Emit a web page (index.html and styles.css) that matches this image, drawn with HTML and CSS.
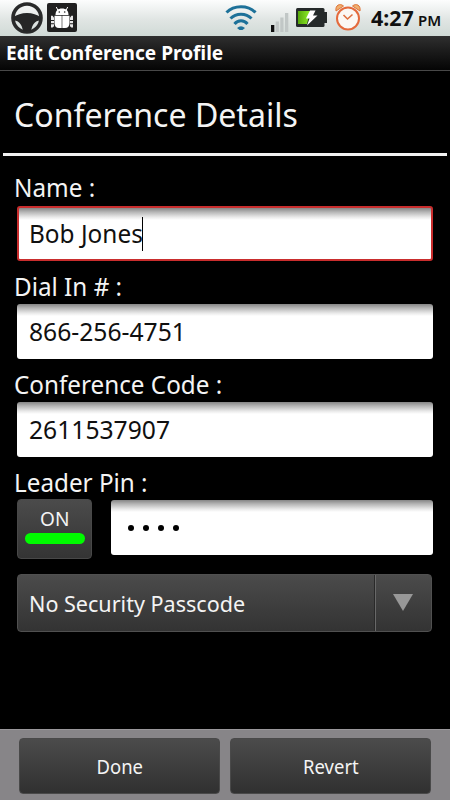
FILE: index.html
```html
<!DOCTYPE html>
<html lang="en">
<head>
<meta charset="utf-8">
<title>Edit Conference Profile</title>
<link rel="stylesheet" href="styles.css">
</head>
<body>
<header class="status">
  <svg class="ic-wheel" width="34" height="34" viewBox="0 0 34 34">
    <circle cx="17" cy="17" r="14" fill="none" stroke="#292a2a" stroke-width="3.600"/>
    <path d="M3 16.500C7 13.500 11.500 12 17 12s10 1.500 14 4.500L30 19.500c-5 0-8 4-9 11h-8C12 23.500 9 19.500 4 19.500z" fill="#252626"/>
  </svg>
  <svg class="ic-bug" width="30" height="29" viewBox="0 0 30 29">
    <rect width="30" height="29" rx="2" fill="#202020"/>
    <path d="M8.500 12C8.500 7.500 11 5.500 15 5.500s6.500 2 6.500 6.500z" fill="#fff"/>
    <path d="M10.800 7 9.300 4M19.200 7 20.700 4" stroke="#fff" stroke-width="1"/>
    <circle cx="12.300" cy="9" r=".8" fill="#222"/><circle cx="17.700" cy="9" r=".8" fill="#222"/>
    <path d="M7.500 12.800h7.200V25H12c-3 0-4.500-2-4.500-5zM15.300 12.800h7.200V20c0 3-1.500 5-4.500 5h-2.700z" fill="#fff"/>
    <path d="M4 12.800h1.600l1.400 2v2.100H4zM4 17.900h3v2.300H4zM4 24.600h1.600l1.400-1.400v-2H4zM26 12.800h-1.600l-1.400 2v2.100h3zM26 17.900h-3v2.300h3zM26 24.600h-1.600L23 23.200v-2h3z" fill="#e8e8e8"/>
  </svg>
  <span class="spacer"></span>
  <svg class="ic-wifi" width="32" height="28" viewBox="0 0 32 28">
    <g fill="none" stroke="#1d7199" stroke-width="3">
      <path d="M1.500 8.500C9 .7 23 .7 30.500 8.500"/>
      <path d="M5.500 14.500C11 8.700 21 8.700 26.500 14.500"/>
      <path d="M9.500 20C13 15.800 19 15.800 22.500 20"/>
    </g>
    <path d="M12 24q4-3.500 8 0l-2.500 2h-3z" fill="#1d7199"/>
  </svg>
  <svg class="ic-signal" width="18" height="19" viewBox="0 0 18 19">
    <path d="M0 12h3.300v7H0z" fill="#101010"/>
    <path d="M4.700 8.500h3.200V19H4.700zM9.300 4.500h3.200V19H9.300zM14 0h3.300v19H14z" fill="#c1c7c6"/>
  </svg>
  <svg class="ic-battery" width="32" height="20" viewBox="0 0 32 20">
    <defs><linearGradient id="charge"><stop offset="0" stop-color="#56a80b"/><stop offset="1" stop-color="#8fec28"/></linearGradient></defs>
    <rect x="0" y="0" width="28.500" height="19" rx="1.500" fill="#252a2a"/>
    <path d="M28 4h3v11h-3z" fill="#252a2a"/>
    <path d="M2 3h12l-3 13H2z" fill="url(#charge)"/>
    <path d="M14 2.500h5.500L17 7.500h4.500L11 17.500l2.500-7H10z" fill="#fff"/>
  </svg>
  <svg class="ic-alarm" width="26" height="27" viewBox="0 0 26 27">
    <path d="M1 7C0 1 5-1 8.500 2zM25 7c1-6-4-8-7.500-5z" fill="#f0b070" stroke="#df7439"/>
    <circle cx="13" cy="14.500" r="11" fill="#fbf8f4" stroke="#e46a3c" stroke-width="2"/>
    <path d="M8.500 11l4 4 5-4.500" fill="none" stroke="#dd7040" stroke-width="1.600"/>
  </svg>
  <span class="clock"><span class="fit time">4:27</span></span>
  <span class="ampm"><span class="fit pm">PM</span></span>
</header>
<div class="titlebar"><span class="fit title">Edit Conference Profile</span></div>
<main>
  <h1><span class="fit heading">Conference Details</span></h1>
  <label class="lbl"><span class="fit f-name">Name :</span></label>
  <div class="input focus"><span class="fit v-name">Bob Jones</span><i class="caret"></i></div>
  <label class="lbl dial"><span class="fit f-dial">Dial In # :</span></label>
  <div class="input"><span class="fit v-dial">866-256-4751</span></div>
  <label class="lbl code"><span class="fit f-code">Conference Code :</span></label>
  <div class="input"><span class="fit v-code">2611537907</span></div>
  <label class="lbl leader"><span class="fit f-pin">Leader Pin :</span></label>
  <div class="pinrow">
    <button class="toggle"><span class="fit on">ON</span><i class="lamp"></i></button>
    <div class="input pin"><i></i><i></i><i></i><i></i></div>
  </div>
  <div class="select">
    <div class="choice"><span class="fit sel">No Security Passcode</span></div>
    <div class="arrow"><svg width="20" height="17" viewBox="0 0 20 17"><path d="M0 0h20L10 17z" fill="#989898"/></svg></div>
  </div>
</main>
<footer>
  <button class="btn"><span class="fit done">Done</span></button>
  <button class="btn"><span class="fit revert">Revert</span></button>
</footer>
</body>
</html>
```
FILE: styles.css
```css
* { box-sizing: border-box; }
body {
  margin: 0; width: 450px; height: 800px; overflow: hidden;
  display: flex; flex-direction: column;
  background: #000; color: #f4f4f4;
  font-family: "Noto Sans", "Open Sans", sans-serif;
}
button { font: inherit; color: inherit; margin: 0; padding: 0; }
.fit { display: inline-block; white-space: nowrap; transform-origin: 0 50%; }
.title { transform: scaleX(1.004); }
.time { transform: scaleX(1.02); }
.heading { transform: scaleX(.957); }
.f-name, .f-dial, .f-code, .f-pin { transform: scaleX(.97); }
.v-name { transform: scaleX(.975); }
.v-dial, .v-code { transform: scaleX(.986); }
.sel { transform: scaleX(.958); }
.done, .revert { transform: scaleX(.9); transform-origin: 50% 50%; }
.on { transform: scaleX(.93); transform-origin: 50% 50%; }

.status {
  height: 36px; flex: none; display: flex; align-items: flex-start;
  background: linear-gradient(#fcfdfd, #e0e5e3 55%, #d0dad6);
  color: #101010; padding-left: 10px;
}
.status svg { flex: none; }
.ic-wheel { margin-top: 1px; }
.ic-bug { margin: 3px 0 0 3px; }
.spacer { flex: 1; }
.ic-wifi { margin: 4px 14px 0 0; }
.ic-signal { margin: 13px 7px 0 0; }
.ic-battery { margin: 8px 7px 0 0; }
.ic-alarm { margin: 4px 10px 0 0; }
.clock { width: 47px; font-size: 21px; font-weight: 700; line-height: 36px; }
.ampm { width: 32px; font-size: 15px; font-weight: 600; line-height: 40px; }

.titlebar {
  height: 35px; flex: none; padding-left: 6px;
  background: linear-gradient(#2f2f2f, #1b1b1b 45%, #050505);
  border-bottom: 1px solid #484848;
  font-size: 19px; font-weight: 700; line-height: 34px; color: #fff;
}

main { flex: 1; padding: 0 17px; }
h1 {
  height: 85px; margin: 0 -14px 0 -14px; padding-left: 11px;
  border-bottom: 3px solid #f1f1f1;
  font-size: 33.5px; font-weight: 400; line-height: 86px;
}
.lbl { display: block; height: 50px; margin-left: -3px; font-size: 25px; line-height: 62px; }
.lbl.dial, .lbl.code { height: 43px; line-height: 50px; }
.lbl.leader { height: 42px; line-height: 50px; }
.input {
  height: 55px; padding-left: 12px; border-radius: 3px;
  background: linear-gradient(#858585, #b5b5b5 4px, #e8e8e8 9px, #fff 12px);
  color: #101010; font-size: 25px; line-height: 55px;
  display: flex; align-items: center;
}
.input.focus { border: 2px solid #c92d2d; padding-left: 10px; line-height: 51px; }
.caret { width: 1px; height: 34px; margin-left: -4px; background: #000; }
.pinrow { display: flex; justify-content: space-between; height: 75px; align-items: flex-start; }
.toggle {
  width: 75px; height: 60px; border: 1px solid #484848; border-radius: 4px;
  background: linear-gradient(#4b4b4b, #343434);
  display: flex; flex-direction: column; align-items: center;
  font-size: 20.5px; line-height: 37px;
}
.toggle .on { height: 33px; }
.lamp { width: 60px; height: 11px; border-radius: 6px; background: #00fb00; }
.pin { width: 322px; margin-top: 1px; padding-left: 17px; gap: 9px; }
.pin i { width: 6px; height: 6px; border-radius: 50%; background: #000; }
.select {
  width: 415px; height: 58px; border: 1px solid #505050; border-radius: 4px;
  background: linear-gradient(#4b4b4b, #333);
  display: flex; font-size: 22.5px; line-height: 58px;
}
.choice { width: 357px; padding-left: 11px; border-right: 1px solid #292929; }
.arrow { flex: 1; display: flex; align-items: center; justify-content: center; border-left: 1px solid #686868; }
.arrow svg { margin: -1px 0 0 -2px; }

footer {
  height: 71px; flex: none; display: flex; gap: 10px; padding: 8px 19px 0 19px;
  background: #878588; border-top: 1px solid #9a989b;
}
.btn {
  flex: 1; height: 56px; border: 1px solid #494949; border-radius: 4px;
  background: linear-gradient(#4b4b4b, #303030);
  font-size: 20.5px; line-height: 54px;
}
```
